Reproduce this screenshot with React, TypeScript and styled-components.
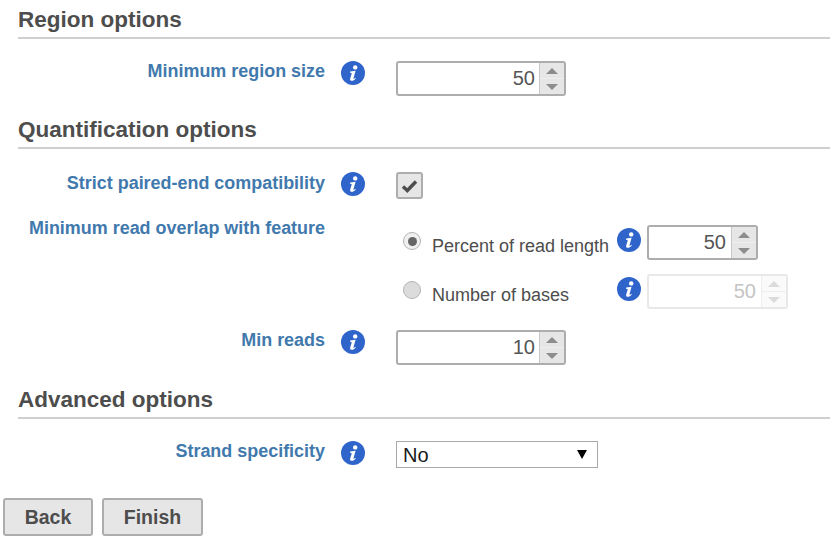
import React from "react";
import styled, { createGlobalStyle } from "styled-components";

const Global = createGlobalStyle`
  html, body { margin: 0; padding: 0; background: #fff; overflow: hidden; }
  body { font-family: "Liberation Sans", Arial, sans-serif; color: #4d4d4d; }
`;

const Page = styled.div`
  width: 830px;
  height: 545px;
  padding-top: 5px;
  box-sizing: border-box;
`;

const Section = styled.section<{ $top?: number }>`
  margin-left: 18px;
  padding-top: ${(p) => p.$top ?? 0}px;
`;

const Heading = styled.h2`
  margin: 0;
  font-size: 22.5px;
  line-height: 29px;
  font-weight: 700;
  color: #4d4d4d;
  padding-bottom: 3px;
  border-bottom: 2px solid #cfcfcf;
`;

const Row = styled.div<{ $top: number }>`
  display: grid;
  grid-template-columns: 307px 71px 1fr;
  margin-top: ${(p) => p.$top}px;
`;

const Label = styled.label<{ $drop?: number }>`
  text-align: right;
  font-size: 17.95px;
  font-weight: 700;
  line-height: 20px;
  color: #4179ad;
  padding-top: ${(p) => p.$drop ?? 0}px;
`;

const InfoSlot = styled.div`
  padding-left: 16px;
`;

const InfoSvg = styled.svg`
  display: block;
  width: 24px;
  height: 24px;
`;

const Info = () => (
  <InfoSvg viewBox="0 0 24 24">
    <circle cx="12" cy="12" r="12" fill="#2f65cb" />
    <circle cx="14.2" cy="6.4" r="2.2" fill="#fff" />
    <path
      d="M9.2 10.4 L14.6 9.8 L12.4 17.4 C12.2 18.1 12.9 18.1 14.2 16.7 L14.8 17.2 C13.4 19.2 11.8 19.9 10.2 19.7 C9.2 19.5 8.9 18.6 9.2 17.5 L10.8 12.2 L9.1 11.8 Z"
      fill="#fff"
    />
  </InfoSvg>
);

const Spinner = styled.div<{ $w: number; $off?: boolean }>`
  display: flex;
  box-sizing: border-box;
  width: ${(p) => p.$w}px;
  height: 35px;
  border: 2px solid ${(p) => (p.$off ? "#e8e8e8" : "#adadad")};
  border-radius: 3px;
  background: #fff;
`;

const SpinValue = styled.div<{ $off?: boolean; $pad: number }>`
  flex: 1;
  text-align: right;
  padding-right: ${(p) => p.$pad}px;
  font-size: 20px;
  line-height: 31px;
  color: ${(p) => (p.$off ? "#c4c4c4" : "#555555")};
`;

const SpinButtons = styled.div<{ $off?: boolean }>`
  width: 24px;
  display: flex;
  flex-direction: column;
  border-left: 1px solid ${(p) => (p.$off ? "#eeeeee" : "#c8c8c8")};
  background: ${(p) => (p.$off ? "#fafafa" : "#e6e6e6")};
`;

const SpinPart = styled.div<{ $off?: boolean }>`
  flex: 1;
  display: flex;
  align-items: center;
  justify-content: center;
  & + & {
    border-top: 1px solid ${(p) => (p.$off ? "#eeeeee" : "#fafafa")};
  }
`;

const Arrow = styled.i<{ $up?: boolean; $off?: boolean }>`
  width: 0;
  height: 0;
  border-left: 6px solid transparent;
  border-right: 6px solid transparent;
  ${(p) => (p.$up ? "border-bottom" : "border-top")}: 6px solid ${(p) => (p.$off ? "#dcdcdc" : "#8c8c8c")};
`;

const NumberField = ({ value, w, off, pad = 5 }: { value: number; w: number; off?: boolean; pad?: number }) => (
  <Spinner $w={w} $off={off}>
    <SpinValue $off={off} $pad={pad}>{value}</SpinValue>
    <SpinButtons $off={off}>
      <SpinPart $off={off}><Arrow $up $off={off} /></SpinPart>
      <SpinPart $off={off}><Arrow $off={off} /></SpinPart>
    </SpinButtons>
  </Spinner>
);

const CheckBox = styled.div`
  box-sizing: border-box;
  width: 27px;
  height: 27px;
  border: 2px solid #adadad;
  border-radius: 3px;
  background: #e6e6e6;
  display: flex;
  align-items: center;
  justify-content: center;
`;

const OptionList = styled.div`
  margin: -13px 0 0 378px;
  display: flex;
  flex-direction: column;
  gap: 14px;
`;

const Option = styled.div`
  display: flex;
  align-items: flex-start;
`;

const RadioLabel = styled.div`
  display: flex;
  width: 221px;
  align-items: center;
  height: 35px;
  font-size: 18px;
  color: #4d4d4d;
  padding-left: 7px;
  box-sizing: border-box;
`;

const Radio = styled.span<{ $on?: boolean }>`
  box-sizing: border-box;
  width: 18px;
  height: 18px;
  border-radius: 50%;
  border: 1px solid #b5b5b5;
  background: ${(p) => (p.$on ? "#f0f0f0" : "#dcdcdc")};
  margin: -3px 11px 0 0;
  display: flex;
  align-items: center;
  justify-content: center;
  &::after {
    content: "";
    display: ${(p) => (p.$on ? "block" : "none")};
    width: 9px;
    height: 9px;
    border-radius: 50%;
    background: #666;
  }
`;

const RadioText = styled.span`
  margin-top: 7px;
`;

const OptionInfo = styled.div`
  width: 30px;
  margin: 3px 0 0 0;
`;

const Select = styled.div`
  box-sizing: border-box;
  width: 202px;
  height: 27px;
  border: 1px solid #a9a9a9;
  display: flex;
  align-items: center;
  justify-content: space-between;
  padding: 2px 10px 0 6px;
  font-size: 20px;
  color: #1a1a1a;
`;

const SelectArrow = styled.i`
  width: 0;
  height: 0;
  margin-top: -2px;
  border-left: 5px solid transparent;
  border-right: 5px solid transparent;
  border-top: 9px solid #000;
`;

const Footer = styled.div`
  display: flex;
  gap: 9px;
  margin: 30px 0 0 3px;
`;

const Button = styled.button<{ $w: number }>`
  box-sizing: border-box;
  width: ${(p) => p.$w}px;
  height: 38px;
  border: 2px solid #adadad;
  border-radius: 3px;
  background: #e6e6e6;
  color: #4d4d4d;
  font-family: "Liberation Sans", Arial, sans-serif;
  font-size: 19.5px;
  font-weight: 700;
  padding: 0;
`;

export default function App() {
  return (
    <Page>
      <Global />
      <Section>
        <Heading>Region options</Heading>
        <Row $top={22}>
          <Label>Minimum region size</Label>
          <InfoSlot><Info /></InfoSlot>
          <NumberField value={50} w={170} pad={4} />
        </Row>
      </Section>
      <Section $top={19}>
        <Heading>Quantification options</Heading>
        <Row $top={23}>
          <Label $drop={1}>Strict paired-end compatibility</Label>
          <InfoSlot><Info /></InfoSlot>
          <CheckBox>
            <svg width="17" height="14" viewBox="0 0 17 14">
              <path d="M2 7.5 L6.3 11.5 L15 2.5" fill="none" stroke="#4d4d4d" strokeWidth="3.4" />
            </svg>
          </CheckBox>
        </Row>
        <Row $top={19}>
          <Label>Minimum read overlap with feature</Label>
          <span />
          <span />
        </Row>
        <OptionList>
          <Option>
            <RadioLabel><Radio $on /><RadioText>Percent of read length</RadioText></RadioLabel>
            <OptionInfo><Info /></OptionInfo>
            <NumberField value={50} w={111} />
          </Option>
          <Option>
            <RadioLabel><Radio /><RadioText>Number of bases</RadioText></RadioLabel>
            <OptionInfo><Info /></OptionInfo>
            <NumberField value={50} w={141} off />
          </Option>
        </OptionList>
        <Row $top={21}>
          <Label>Min reads</Label>
          <InfoSlot><Info /></InfoSlot>
          <NumberField value={10} w={170} pad={4} />
        </Row>
      </Section>
      <Section $top={20}>
        <Heading>Advanced options</Heading>
        <Row $top={22}>
          <Label>Strand specificity</Label>
          <InfoSlot><Info /></InfoSlot>
          <Select>No<SelectArrow /></Select>
        </Row>
      </Section>
      <Footer>
        <Button $w={90}>Back</Button>
        <Button $w={101}>Finish</Button>
      </Footer>
    </Page>
  );
}
